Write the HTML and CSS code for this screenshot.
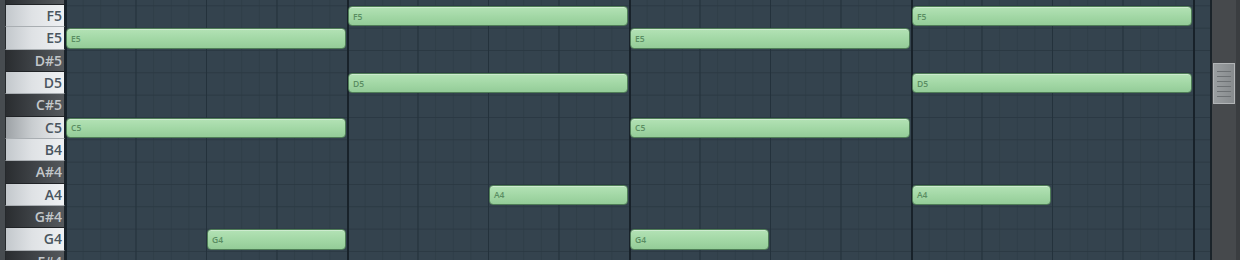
FILE: index.html
```html
<!DOCTYPE html>
<html lang="en">
<head>
    <meta charset="UTF-8">
    <meta name="viewport" content="width=device-width, initial-scale=1.0">
    <title>Piano roll</title>
    <link rel="stylesheet" href="styles.css">
</head>
<body>
    <div class="roll">
        <div class="keys">
            <div class="key black">F#5</div>
            <div class="key white">F5</div>
            <div class="key white">E5</div>
            <div class="key black">D#5</div>
            <div class="key white">D5</div>
            <div class="key black">C#5</div>
            <div class="key white active">C5</div>
            <div class="key white">B4</div>
            <div class="key black">A#4</div>
            <div class="key white">A4</div>
            <div class="key black">G#4</div>
            <div class="key white">G4</div>
            <div class="key black">F#4</div>
        </div>

        <div class="grid">
            <!-- rows: 1 = F#5 ... 13 = F#4, columns are 1/16 steps -->
            <div class="note" style="grid-row: 2; grid-column: 17 / span 16">F5</div>
            <div class="note" style="grid-row: 2; grid-column: 49 / span 16">F5</div>
            <div class="note" style="grid-row: 3; grid-column: 1 / span 16">E5</div>
            <div class="note" style="grid-row: 3; grid-column: 33 / span 16">E5</div>
            <div class="note" style="grid-row: 5; grid-column: 17 / span 16">D5</div>
            <div class="note" style="grid-row: 5; grid-column: 49 / span 16">D5</div>
            <div class="note" style="grid-row: 7; grid-column: 1 / span 16">C5</div>
            <div class="note" style="grid-row: 7; grid-column: 33 / span 16">C5</div>
            <div class="note" style="grid-row: 10; grid-column: 25 / span 8">A4</div>
            <div class="note" style="grid-row: 10; grid-column: 49 / span 8">A4</div>
            <div class="note" style="grid-row: 12; grid-column: 9 / span 8">G4</div>
            <div class="note" style="grid-row: 12; grid-column: 33 / span 8">G4</div>
        </div>

        <div class="scrollbar">
            <div class="thumb">
                <span></span><span></span><span></span><span></span><span></span><span></span>
            </div>
        </div>
    </div>
</body>
</html>
```

FILE: styles.css
```css
html, body {
    margin: 0;
    padding: 0;
    width: 100%;
    height: 100%;
    background-color: #34434e;
    overflow: hidden;
}

.roll {
    display: flex;
    height: 260px;
    overflow: hidden;
    font-family: "Open Sans", "Liberation Sans", sans-serif;
}

/* keyboard */
.keys {
    width: 65px;
    flex-shrink: 0;
    display: flex;
    flex-direction: column;
    margin-top: -17.333px;
    background-color: #41464a;
    border-left: 5px solid #474c50;
    box-sizing: border-box;
}

.key {
    height: 22.333px;
    flex-shrink: 0;
    box-sizing: border-box;
    display: flex;
    align-items: center;
    justify-content: flex-end;
    padding-right: 2px;
    font-size: 14px;
    font-weight: 600;
    border-left: 1px solid #25292c;
    border-right: 1px solid #1b2329;
}

.key.white {
    background: linear-gradient(to right, #c3c8cc 0%, #dfe2e5 45%, #eff1f3 100%);
    color: #4a5660;
    border-bottom: 1px solid #a9aeb2;
}

.key.white.active {
    background: linear-gradient(to right, #9da2a6 0%, #c9cdd0 45%, #eceef0 100%);
}

.key.black {
    background: linear-gradient(to right, #2a2d30 0%, #3b3f43 40%, #55595d 100%);
    color: #c3c7ca;
    border-bottom: 1px solid #202326;
}

/* note grid */
.grid {
    width: 1145px;
    flex-shrink: 0;
    margin-top: -17.333px;
    height: 290px;
    display: grid;
    grid-template-columns: repeat(65, 17.625px);
    grid-template-rows: repeat(13, 22.333px);
    background-color: #34434e;
    background-image:
        linear-gradient(to right, #18222a 0, #18222a 1.5px, transparent 1.5px),
        linear-gradient(to right, #24323c 0, #24323c 1px, transparent 1px),
        linear-gradient(to bottom, #2b3943 0, #2b3943 1px, transparent 1px),
        linear-gradient(to right, #2f3e48 0, #2f3e48 1px, transparent 1px);
    background-size:
        282px 100%,
        70.5px 100%,
        100% 22.333px,
        17.625px 100%;
}

.note {
    margin: 1px;
    box-sizing: border-box;
    border: 1px solid #4f7d57;
    border-radius: 4px;
    background: linear-gradient(to bottom, #b3e2b5 0%, #a3d8a6 50%, #94cc98 100%);
    box-shadow: inset 0 1px 0 rgba(255, 255, 255, 0.35);
    color: #5a8d62;
    font-size: 8.5px;
    font-weight: 600;
    padding-left: 4px;
    display: flex;
    align-items: center;
    overflow: hidden;
}

/* vertical scrollbar */
.scrollbar {
    flex: 1;
    background-color: #46494c;
    border-left: 2px solid #1b242a;
    border-right: 4px solid #3a3d40;
    position: relative;
}

.thumb {
    position: absolute;
    top: 63px;
    left: 1px;
    right: 1px;
    height: 41px;
    box-sizing: border-box;
    background: linear-gradient(to right, #9a9ea0, #878b8e);
    border: 1px solid #b2b5b7;
    display: flex;
    flex-direction: column;
    justify-content: center;
    gap: 4px;
    padding: 0 3px;
}

.thumb span {
    height: 1px;
    background-color: #6d7174;
}
```
